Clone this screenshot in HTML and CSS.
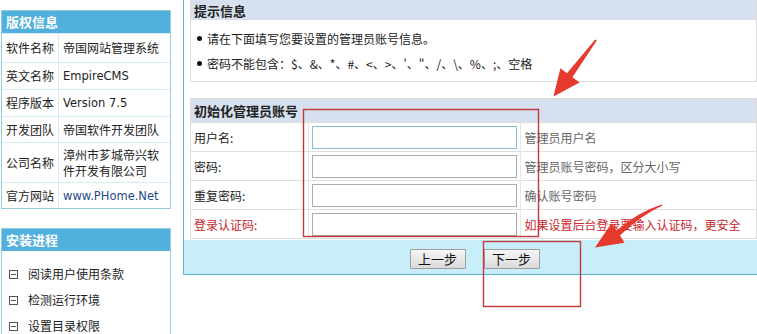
FILE: index.html
```html
<!DOCTYPE html>
<html lang="zh-CN">
<head>
<meta charset="utf-8">
<title>帝国网站管理系统 安装</title>
<link rel="stylesheet" href="styles.css">
</head>
<body>
<div class="page">
  <aside class="sidebar">
    <section class="side-box">
      <div class="side-head">版权信息</div>
      <table class="side-table">
        <tr class="r1"><td class="k">软件名称</td><td>帝国网站管理系统</td></tr>
        <tr class="r2"><td class="k">英文名称</td><td class="lat">EmpireCMS</td></tr>
        <tr class="r3"><td class="k">程序版本</td><td class="lat">Version 7.5</td></tr>
        <tr class="r4"><td class="k">开发团队</td><td>帝国软件开发团队</td></tr>
        <tr class="r5"><td class="k">公司名称</td><td>漳州市芗城帝兴软件开发有限公司</td></tr>
        <tr class="r6"><td class="k">官方网站</td><td class="lat link">www.PHome.Net</td></tr>
      </table>
    </section>
    <section class="side-box steps">
      <div class="side-head">安装进程</div>
      <ul class="step-list">
        <li><span class="ico"></span>阅读用户使用条款</li>
        <li><span class="ico"></span>检测运行环境</li>
        <li><span class="ico"></span>设置目录权限</li>
      </ul>
    </section>
  </aside>

  <main class="main">
    <div class="content">
      <section class="panel">
        <div class="panel-head">提示信息</div>
        <ul class="tips">
          <li>请在下面填写您要设置的管理员账号信息。</li>
          <li>密码不能包含：$、&amp;、*、#、&lt;、&gt;、'、"、/、\、%、;、空格</li>
        </ul>
      </section>
      <section class="panel form-panel">
        <div class="panel-head head2">初始化管理员账号</div>
        <table class="form-table">
          <colgroup><col class="c1"><col class="c2"><col class="c3"></colgroup>
          <tr><td>用户名:</td><td><input class="inp focus" type="text"></td><td class="hint">管理员用户名</td></tr>
          <tr><td>密码:</td><td><input class="inp" type="password"></td><td class="hint">管理员账号密码，区分大小写</td></tr>
          <tr><td>重复密码:</td><td><input class="inp" type="password"></td><td class="hint">确认账号密码</td></tr>
          <tr><td class="red">登录认证码:</td><td><input class="inp" type="text"></td><td class="hint red">如果设置后台登录要输入认证码，更安全</td></tr>
        </table>
      </section>
    </div>
    <div class="bar">
      <button class="btn" type="button">上一步</button>
      <button class="btn" type="button">下一步</button>
    </div>
  </main>
</div>

<svg class="marks" width="757" height="334" viewBox="0 0 757 334">
  <rect x="303.5" y="109.5" width="235" height="127" fill="none" stroke="#c2393c" stroke-width="1.4"/>
  <rect x="483.5" y="241.5" width="97" height="65" fill="none" stroke="#c2393c" stroke-width="1.4"/>
  <polygon fill="#e63a2f" points="596.8,40.6 572.4,77.2 579.6,82.6 553.5,96.5 560.4,68.2 567,73.2 595.2,39.4"/>
  <path fill="#e63a2f" d="M662.4,205.6 Q640,216 620,235.6 L624.5,242.8 L595,247.5 L611.5,223.2 L616.6,230.4 Q638,212 661.6,204.4 Z"/>
</svg>
</body>
</html>
```

FILE: styles.css
```css
html, body {
  margin: 0;
  padding: 0;
  overflow: hidden;
  background: #ffffff;
}
body {
  font-family: "DejaVu Sans", "Noto Sans CJK SC", sans-serif;
  font-size: 12px;
  color: #222;
  width: 757px;
  position: relative;
}
.page {
  display: flex;
  align-items: flex-start;
  padding-left: 1px;
}

/* sidebar */
.sidebar {
  width: 170px;
  flex: none;
  margin-top: 10px;
  display: flex;
  flex-direction: column;
  gap: 19px;
}
.side-box {
  border: 1px solid #93cbe0;
}
.side-head {
  height: 22px;
  line-height: 22px;
  background: #52b0dc;
  color: #fff;
  font-weight: bold;
  font-size: 13px;
  padding-left: 4px;
  font-family: "Noto Sans CJK SC", sans-serif;
}
.side-table {
  width: 100%;
  border-collapse: collapse;
}
.side-table td {
  border-top: 1px solid #d6eaf2;
  padding: 0 0 0 4px;
  font-family: "Noto Sans CJK SC", sans-serif;
  color: #222;
  line-height: 16px;
}
.side-table td.k {
  width: 52px;
  border-right: 1px solid #d6eaf2;
}
.side-table td.lat {
  font-family: "DejaVu Sans", sans-serif;
  font-size: 11.5px;
}
.side-table td.link {
  color: #1f4a8c;
}
.side-table .r1 td { height: 28px; }
.side-table .r2 td { height: 26px; }
.side-table .r3 td { height: 26px; }
.side-table .r4 td { height: 25px; }
.side-table .r5 td { height: 39px; }
.side-table .r6 td { height: 25px; }

.steps {
  min-height: 120px;
}
.step-list {
  list-style: none;
  margin: 0;
  padding: 10px 0 0 7px;
  font-family: "Noto Sans CJK SC", sans-serif;
}
.step-list li {
  height: 26px;
  line-height: 26px;
  display: flex;
  align-items: center;
  color: #222;
}
.ico {
  width: 7px;
  height: 7px;
  border: 1px solid #555;
  margin-right: 10px;
  position: relative;
}
.ico::after {
  content: "";
  position: absolute;
  left: 1px;
  right: 1px;
  top: 3px;
  height: 1px;
  background: #555;
}

/* main */
.main {
  margin-left: 12px;
  flex: 1;
  min-width: 0;
  border-left: 1px solid #5cb4c9;
  border-bottom: 1px solid #5cb4c9;
}
.content {
  padding: 0 0 0 6px;
  display: flex;
  flex-direction: column;
  gap: 16px;
}
.panel {
  border: 1px solid #dcdcdc;
  border-top: none;
}
.panel-head {
  height: 20px;
  line-height: 22px;
  background: #d6e0ee;
  font-weight: bold;
  font-size: 13px;
  padding-left: 3px;
  color: #222;
  font-family: "Noto Sans CJK SC", sans-serif;
}
.form-panel {
  border-top: 1px solid #dcdcdc;
}
.head2 {
  height: 23px;
  line-height: 23px;
}
.tips {
  margin: 0;
  padding: 6px 0 5px 6px;
  list-style: none;
  font-family: "Noto Sans CJK SC", sans-serif;
}
.tips li {
  height: 25px;
  line-height: 25px;
  display: flex;
  align-items: center;
}
.tips li::before {
  content: "";
  width: 5px;
  height: 5px;
  border-radius: 50%;
  background: #111;
  margin-right: 5px;
}
.form-table {
  width: 100%;
  border-collapse: collapse;
  table-layout: fixed;
  font-family: "Noto Sans CJK SC", sans-serif;
}
.form-table col.c1 { width: 117px; }
.form-table col.c2 { width: 212px; }
.form-table td {
  border-top: 1px solid #dedede;
  height: 28px;
  padding: 0 0 0 3px;
  color: #222;
  white-space: nowrap;
  overflow: hidden;
}
.form-table td + td {
  border-left: 1px solid #e6e6e6;
}
.form-table td.hint {
  color: #666;
  padding-left: 4px;
}
.form-table td.red {
  color: #c8282c;
}
.inp {
  display: block;
  box-sizing: border-box;
  width: 205px;
  height: 23px;
  margin: 0;
  border: 1px solid #ababab;
  background: #fff;
  padding: 0 3px;
}
.inp.focus {
  border-color: #8ebbd6;
}
.bar {
  height: 34px;
  margin-top: 1px;
  background: #c8eefa;
  display: flex;
  justify-content: center;
  align-items: flex-start;
  gap: 18px;
  padding: 9px 0 0 8px;
  box-sizing: border-box;
}
.btn {
  width: 56px;
  height: 20px;
  padding: 0;
  border: 1px solid #9e9e9e;
  border-radius: 1px;
  background: linear-gradient(#f6f6f6, #dadada);
  font-family: "Noto Sans CJK SC", sans-serif;
  font-size: 13px;
  line-height: 18px;
  color: #111;
}

/* annotation overlay */
.marks {
  position: absolute;
  left: 0;
  top: 0;
  pointer-events: none;
}
```
